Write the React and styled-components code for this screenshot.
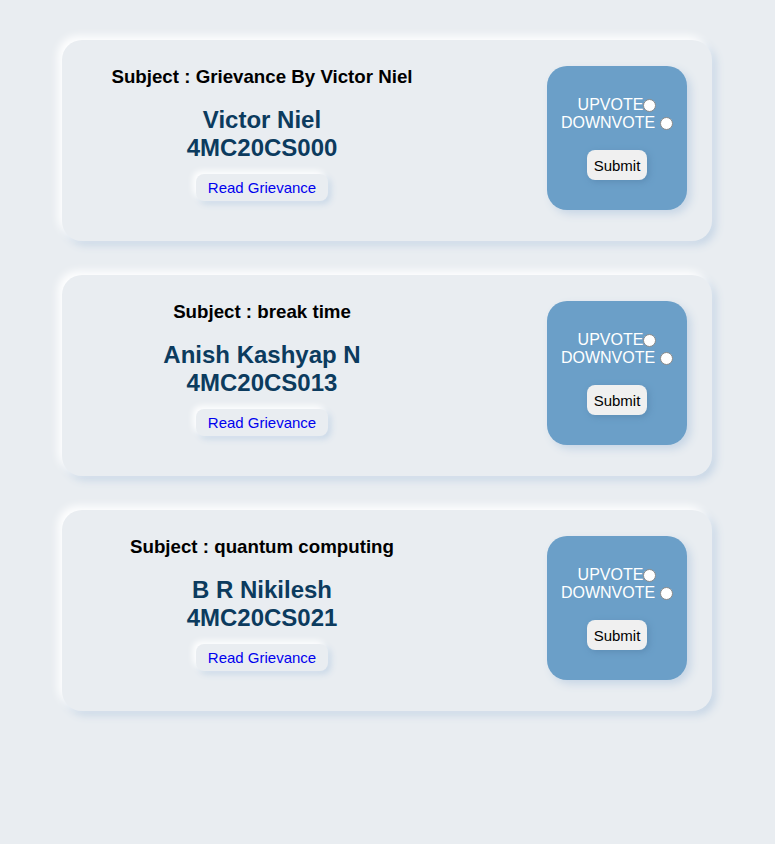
import React from "react"
import styled, { createGlobalStyle } from "styled-components"

const Global = createGlobalStyle`
  body {
    margin: 0;
    background: #e9edf1;
    font-family: "Liberation Sans", Arial, sans-serif;
  }
`

const Page = styled.div`
  min-height: 844px;
  padding: 40px 63px 0 62px;
  display: flex;
  flex-direction: column;
  gap: 34px;
  box-sizing: border-box;
`

const Card = styled.div`
  height: 201px;
  box-sizing: border-box;
  border-radius: 20px;
  background: #e9edf1;
  box-shadow: -4px -4px 8px #ffffff, 4px 4px 8px #c7d6e6;
  display: flex;
  align-items: center;
  padding: 0 25px 5px 0;
`

const Info = styled.div`
  width: 400px;
  display: flex;
  flex-direction: column;
  align-items: center;
  padding-bottom: 9px;
`

const Subject = styled.h3`
  margin: 0 0 18px;
  font-size: 18.72px;
  font-weight: bold;
  color: #000;
`

const Name = styled.h2`
  margin: 0;
  font-size: 24px;
  line-height: 28px;
  font-weight: bold;
  color: #0c3b5e;
  text-align: center;
`

const ReadButton = styled.button`
  margin-top: 12px;
  border: none;
  background: #e9edf1;
  color: #0000ee;
  font-family: inherit;
  font-size: 15px;
  padding: 5px 12px;
  border-radius: 8px;
  box-shadow: -3px -3px 6px #ffffff, 3px 3px 6px #c9d8e8;
  cursor: pointer;
`

const VoteBox = styled.form`
  margin-left: auto;
  width: 140px;
  height: 144px;
  border-radius: 20px;
  background: #6b9fc8;
  box-shadow: 4px 4px 8px #c7d6e6;
  display: flex;
  flex-direction: column;
  align-items: center;
  justify-content: center;
  color: #fff;
  font-size: 16px;
`

const Option = styled.label`
  display: flex;
  align-items: center;
  line-height: 18px;
`

const Radio = styled.input`
  appearance: none;
  width: 13px;
  height: 13px;
  margin: 0 0 0 ${p => p.$gap}px;
  border-radius: 50%;
  background: #fff;
  border: 1px solid #8a8a8a;
  box-sizing: border-box;
`

const Submit = styled.button`
  margin-top: 18px;
  border: none;
  background: #f0f0f0;
  color: #000;
  font-family: inherit;
  font-size: 15px;
  padding: 0 7px;
  height: 30px;
  border-radius: 8px;
  box-shadow: 2px 2px 6px #5d8db5;
  cursor: pointer;
`

const grievances = [
  { subject: "Grievance By Victor Niel", name: "Victor Niel", usn: "4MC20CS000" },
  { subject: "break time", name: "Anish Kashyap N", usn: "4MC20CS013" },
  { subject: "quantum computing", name: "B R Nikilesh", usn: "4MC20CS021" },
]

export default function App() {
  return (
    <>
      <Global />
      <Page>
        {grievances.map((g, i) => (
          <Card key={i}>
            <Info>
              <Subject>Subject : {g.subject}</Subject>
              <Name>
                {g.name}
                <br />
                {g.usn}
              </Name>
              <ReadButton>Read Grievance</ReadButton>
            </Info>
            <VoteBox onSubmit={e => e.preventDefault()}>
              <Option>
                UPVOTE
                <Radio type="radio" name={"vote" + i} $gap={0} />
              </Option>
              <Option>
                DOWNVOTE
                <Radio type="radio" name={"vote" + i} $gap={5} />
              </Option>
              <Submit type="submit">Submit</Submit>
            </VoteBox>
          </Card>
        ))}
      </Page>
    </>
  )
}
